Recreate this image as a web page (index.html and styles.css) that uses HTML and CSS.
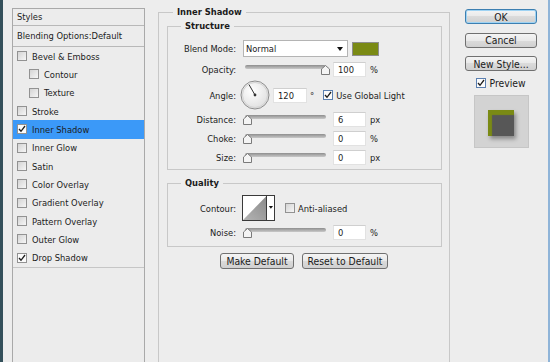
FILE: index.html
```html
<!DOCTYPE html>
<html lang="en">
<head>
    <meta charset="UTF-8">
    <title>Layer Style</title>
    <link rel="stylesheet" href="styles.css">
</head>
<body>
    <div class="window">
        <!-- Styles list -->
        <aside class="styles-panel">
            <div class="panel-head">Styles</div>
            <div class="panel-blend">Blending Options:Default</div>
            <ul class="style-list">
                <li><span class="check"></span>Bevel &amp; Emboss</li>
                <li class="sub"><span class="check"></span>Contour</li>
                <li class="sub"><span class="check"></span>Texture</li>
                <li><span class="check"></span>Stroke</li>
                <li class="active"><span class="check on"><svg width="8" height="8" viewBox="0 0 8 8"><path d="M1 4 L3 6.3 L7 1" fill="none" stroke="#1c1c1c" stroke-width="1.3"/></svg></span>Inner Shadow</li>
                <li><span class="check"></span>Inner Glow</li>
                <li><span class="check"></span>Satin</li>
                <li><span class="check"></span>Color Overlay</li>
                <li><span class="check"></span>Gradient Overlay</li>
                <li><span class="check"></span>Pattern Overlay</li>
                <li><span class="check"></span>Outer Glow</li>
                <li><span class="check on"><svg width="8" height="8" viewBox="0 0 8 8"><path d="M1 4 L3 6.3 L7 1" fill="none" stroke="#1c1c1c" stroke-width="1.3"/></svg></span>Drop Shadow</li>
            </ul>
        </aside>

        <!-- Settings -->
        <main class="settings">
            <fieldset class="group outer">
                <legend>Inner Shadow</legend>

                <fieldset class="group inner structure">
                    <legend>Structure</legend>
                    <div class="row row-blend">
                        <label class="lbl">Blend Mode:</label>
                        <div class="select">Normal<span class="arrow"></span></div>
                        <span class="swatch"></span>
                    </div>
                    <div class="row row-opacity">
                        <label class="lbl">Opacity:</label>
                        <div class="slider"><span class="track"></span><span class="thumb at-max"><svg width="9" height="10" viewBox="0 0 9 10"><path d="M4.5 0.5 L8.5 4 L8.5 9.5 L0.5 9.5 L0.5 4 Z" fill="#f4f4f4" stroke="#7a7a7a"/></svg></span></div>
                        <input class="num" value="100" readonly>
                        <span class="unit">%</span>
                    </div>
                    <div class="row row-angle">
                        <label class="lbl">Angle:</label>
                        <svg class="dial" width="30" height="30" viewBox="0 0 30 30">
                            <defs>
                                <radialGradient id="dialFill" cx="40%" cy="35%" r="70%">
                                    <stop offset="0" stop-color="#ffffff"/>
                                    <stop offset="1" stop-color="#dedede"/>
                                </radialGradient>
                            </defs>
                            <circle cx="15" cy="15" r="14" fill="url(#dialFill)" stroke="#8e8e8e"/>
                            <circle cx="15" cy="15" r="12.5" fill="none" stroke="#d2d2d2"/>
                            <line x1="15" y1="15" x2="9" y2="4.6" stroke="#333" stroke-width="1"/>
                            <circle cx="15" cy="15" r="1.4" fill="#333"/>
                        </svg>
                        <input class="num num-angle" value="120" readonly>
                        <span class="deg">°</span>
                        <span class="check on blue"><svg width="8" height="8" viewBox="0 0 8 8"><path d="M1 4 L3 6.3 L7 1" fill="none" stroke="#1c1c1c" stroke-width="1.3"/></svg></span>
                        <span class="check-text">Use Global Light</span>
                    </div>
                    <div class="row row-distance">
                        <label class="lbl">Distance:</label>
                        <div class="slider"><span class="track"></span><span class="thumb"><svg width="9" height="10" viewBox="0 0 9 10"><path d="M4.5 0.5 L8.5 4 L8.5 9.5 L0.5 9.5 L0.5 4 Z" fill="#f4f4f4" stroke="#7a7a7a"/></svg></span></div>
                        <input class="num" value="6" readonly>
                        <span class="unit">px</span>
                    </div>
                    <div class="row">
                        <label class="lbl">Choke:</label>
                        <div class="slider"><span class="track"></span><span class="thumb"><svg width="9" height="10" viewBox="0 0 9 10"><path d="M4.5 0.5 L8.5 4 L8.5 9.5 L0.5 9.5 L0.5 4 Z" fill="#f4f4f4" stroke="#7a7a7a"/></svg></span></div>
                        <input class="num" value="0" readonly>
                        <span class="unit">%</span>
                    </div>
                    <div class="row">
                        <label class="lbl">Size:</label>
                        <div class="slider"><span class="track"></span><span class="thumb"><svg width="9" height="10" viewBox="0 0 9 10"><path d="M4.5 0.5 L8.5 4 L8.5 9.5 L0.5 9.5 L0.5 4 Z" fill="#f4f4f4" stroke="#7a7a7a"/></svg></span></div>
                        <input class="num" value="0" readonly>
                        <span class="unit">px</span>
                    </div>
                </fieldset>

                <fieldset class="group inner quality">
                    <legend>Quality</legend>
                    <div class="row row-contour">
                        <label class="lbl">Contour:</label>
                        <svg class="contour" width="33" height="26" viewBox="0 0 33 26">
                            <defs>
                                <linearGradient id="contourFill" x1="1" y1="0" x2="0" y2="1">
                                    <stop offset="0" stop-color="#8a8a8a"/>
                                    <stop offset="1" stop-color="#b4b4b4"/>
                                </linearGradient>
                            </defs>
                            <rect x="0.5" y="0.5" width="32" height="25" fill="#fff" stroke="#3a3a3a"/>
                            <path d="M1 25 L24.5 1 L24.5 25 Z" fill="url(#contourFill)"/>
                            <line x1="24.5" y1="0.5" x2="24.5" y2="25.5" stroke="#3a3a3a"/>
                            <path d="M26.8 11 L31 11 L28.9 13.8 Z" fill="#111"/>
                        </svg>
                        <span class="check aa"></span>
                        <span class="check-text">Anti-aliased</span>
                    </div>
                    <div class="row row-noise">
                        <label class="lbl">Noise:</label>
                        <div class="slider"><span class="track"></span><span class="thumb"><svg width="9" height="10" viewBox="0 0 9 10"><path d="M4.5 0.5 L8.5 4 L8.5 9.5 L0.5 9.5 L0.5 4 Z" fill="#f4f4f4" stroke="#7a7a7a"/></svg></span></div>
                        <input class="num" value="0" readonly>
                        <span class="unit">%</span>
                    </div>
                </fieldset>

                <div class="actions">
                    <button class="btn btn-make">Make Default</button>
                    <button class="btn btn-reset">Reset to Default</button>
                </div>
            </fieldset>
        </main>

        <!-- Dialog buttons and preview -->
        <div class="side">
            <div class="side-buttons">
                <button class="btn btn-ok">OK</button>
                <button class="btn">Cancel</button>
                <button class="btn">New Style...</button>
            </div>
            <div class="preview-toggle">
                <span class="check on blue"><svg width="8" height="8" viewBox="0 0 8 8"><path d="M1 4 L3 6.3 L7 1" fill="none" stroke="#1c1c1c" stroke-width="1.3"/></svg></span>
                <span class="check-text">Preview</span>
            </div>
            <div class="preview-box">
                <div class="preview-square"></div>
            </div>
        </div>
    </div>
</body>
</html>
```

FILE: styles.css
```css
/* Base */
* {
    box-sizing: border-box;
}
body {
    margin: 0;
    background: #ededed;
    font-family: "DejaVu Sans Condensed", "Liberation Sans", sans-serif;
    font-size: 9.3px;
    color: #1b1b1b;
    overflow: hidden;
}

/* Window frame */
.window {
    display: flex;
    align-items: flex-start;
    width: 550px;
    height: 362px;
    border-left: 3px solid #34505b;
    border-right: 2px solid #8fb4d8;
    overflow: hidden;
}

/* Checkboxes */
.check {
    flex: none;
    display: inline-flex;
    align-items: center;
    justify-content: center;
    width: 10px;
    height: 10px;
    border: 1px solid #929292;
    background: linear-gradient(135deg, #d4d4d4, #f6f6f6);
}
.check.on {
    background: #fbfbfb;
}
.check.blue {
    border-color: #5a7fb0;
}
.check-text {
    margin-left: 3px;
}

/* Left styles panel */
.styles-panel {
    flex: none;
    width: 133px;
    height: 380px;
    margin: 8px 0 0 9px;
    border: 1px solid #a9a9a9;
    background: #ececec;
}
.panel-head {
    height: 17px;
    line-height: 16px;
    padding-left: 4px;
    border-bottom: 1px solid #b8b8b8;
}
.panel-blend {
    height: 21px;
    line-height: 20px;
    padding-left: 4px;
    border-bottom: 1px solid #b8b8b8;
}
.style-list {
    margin: 0;
    padding: 0;
    list-style: none;
    border-bottom: 1px solid #c6c6c6;
}
.style-list li {
    display: flex;
    align-items: center;
    gap: 5px;
    height: 18.33px;
    padding-left: 4px;
}
.style-list li.sub {
    padding-left: 16px;
}
.style-list li.active {
    background: #3b99f8;
}

/* Group boxes */
.settings {
    flex: none;
    width: 292px;
    margin-left: 13px;
}
.group {
    margin: 0;
    padding: 0;
    min-width: 0;
    border: 1px solid #c8c8c8;
}
.group > legend {
    padding: 0 4px;
    font-weight: bold;
    line-height: 12px;
}
.outer {
    height: 400px;
    margin-top: 6px;
}
.outer > legend {
    margin-left: 14px;
}
.inner {
    margin: 2px 7px 0 8px;
}
.inner > legend {
    margin-left: 13px;
}
.structure {
    padding-bottom: 4px;
}
.quality {
    margin-top: 7px;
    padding-bottom: 6px;
}

/* Control rows */
.row {
    display: flex;
    align-items: center;
    height: 15px;
    margin-top: 4px;
}
.lbl {
    flex: none;
    width: 68px;
    margin-right: 7px;
    text-align: right;
}
.row-blend {
    height: 17px;
    margin-top: 8px;
}
.row-opacity {
    margin-top: 5px;
}
.row-angle {
    height: 30px;
    margin-top: 3px;
}
.row-distance {
    margin-top: 2px;
}
.row-contour {
    height: 26px;
    margin-top: 6px;
}
.row-contour .lbl {
    margin-right: 6px;
}

.select {
    display: flex;
    align-items: center;
    justify-content: space-between;
    width: 105px;
    height: 17px;
    padding: 0 4px 0 2px;
    background: #fff;
    border: 1px solid #b4b4b4;
}
.arrow {
    width: 0;
    height: 0;
    border-left: 3.5px solid transparent;
    border-right: 3.5px solid transparent;
    border-top: 4px solid #111;
}
.swatch {
    width: 27px;
    height: 14px;
    margin-left: 4px;
    background: #7a8a14;
    border: 1px solid #8d8d8d;
}

/* Sliders */
.slider {
    flex: none;
    position: relative;
    width: 85px;
    height: 15px;
    margin-right: 5px;
}
.track {
    display: block;
    width: 81px;
    height: 4px;
    margin: 3px 0 0 2px;
    border-radius: 2px;
    background: linear-gradient(#8e8e8e, #c9c9c9);
}
.thumb {
    position: absolute;
    left: 0;
    top: 3px;
    line-height: 0;
}
.thumb.at-max {
    left: 78px;
}

.num {
    flex: none;
    width: 33px;
    height: 15px;
    padding: 0 0 0 4px;
    font: inherit;
    color: inherit;
    background: #fff;
    border: 1px solid #e2e2e2;
    border-top-color: #cfcfcf;
    outline: none;
}
.unit {
    margin-left: 4px;
}
.dial {
    flex: none;
    margin: 0 3px 0 -3px;
}
.num-angle {
    width: 34px;
}
.deg {
    margin: 0 9px 0 3px;
}
.contour {
    flex: none;
}
.aa {
    margin-left: 10px;
}

/* Buttons */
.btn {
    height: 16px;
    padding: 0;
    font-family: inherit;
    font-size: 10.3px;
    color: #1b1b1b;
    border: 1px solid #707070;
    border-radius: 3px;
    background: linear-gradient(#f4f4f4, #e9e9e9 50%, #dbdbdb 50%, #d0d0d0);
}
.actions {
    display: flex;
    justify-content: center;
    gap: 8px;
    margin-top: 6px;
}
.btn-make {
    width: 74px;
}
.btn-reset {
    width: 86px;
}

/* Right column */
.side {
    flex: none;
    display: flex;
    flex-direction: column;
    align-items: center;
    width: 72px;
    margin: 9px 0 0 15px;
}
.side-buttons {
    display: flex;
    flex-direction: column;
    gap: 8.5px;
}
.side-buttons .btn {
    width: 72px;
    height: 15px;
}
.btn-ok {
    border-color: #3c7fb1;
    box-shadow: inset 0 0 0 1px #9fd3f3;
}
.preview-toggle {
    display: flex;
    align-items: center;
    height: 12px;
    margin-top: 6px;
    font-size: 10.3px;
}
.preview-box {
    display: flex;
    align-items: center;
    justify-content: center;
    width: 55px;
    height: 53px;
    margin-top: 6px;
    padding-top: 3px;
    background: #d3d3d3;
    border: 1px solid #c6c6c6;
}
.preview-square {
    width: 26px;
    height: 26px;
    background: #575757;
    box-shadow: inset 4px 5px 1px #7a8a14, 2px 3px 4px rgba(0, 0, 0, 0.35);
}
```
